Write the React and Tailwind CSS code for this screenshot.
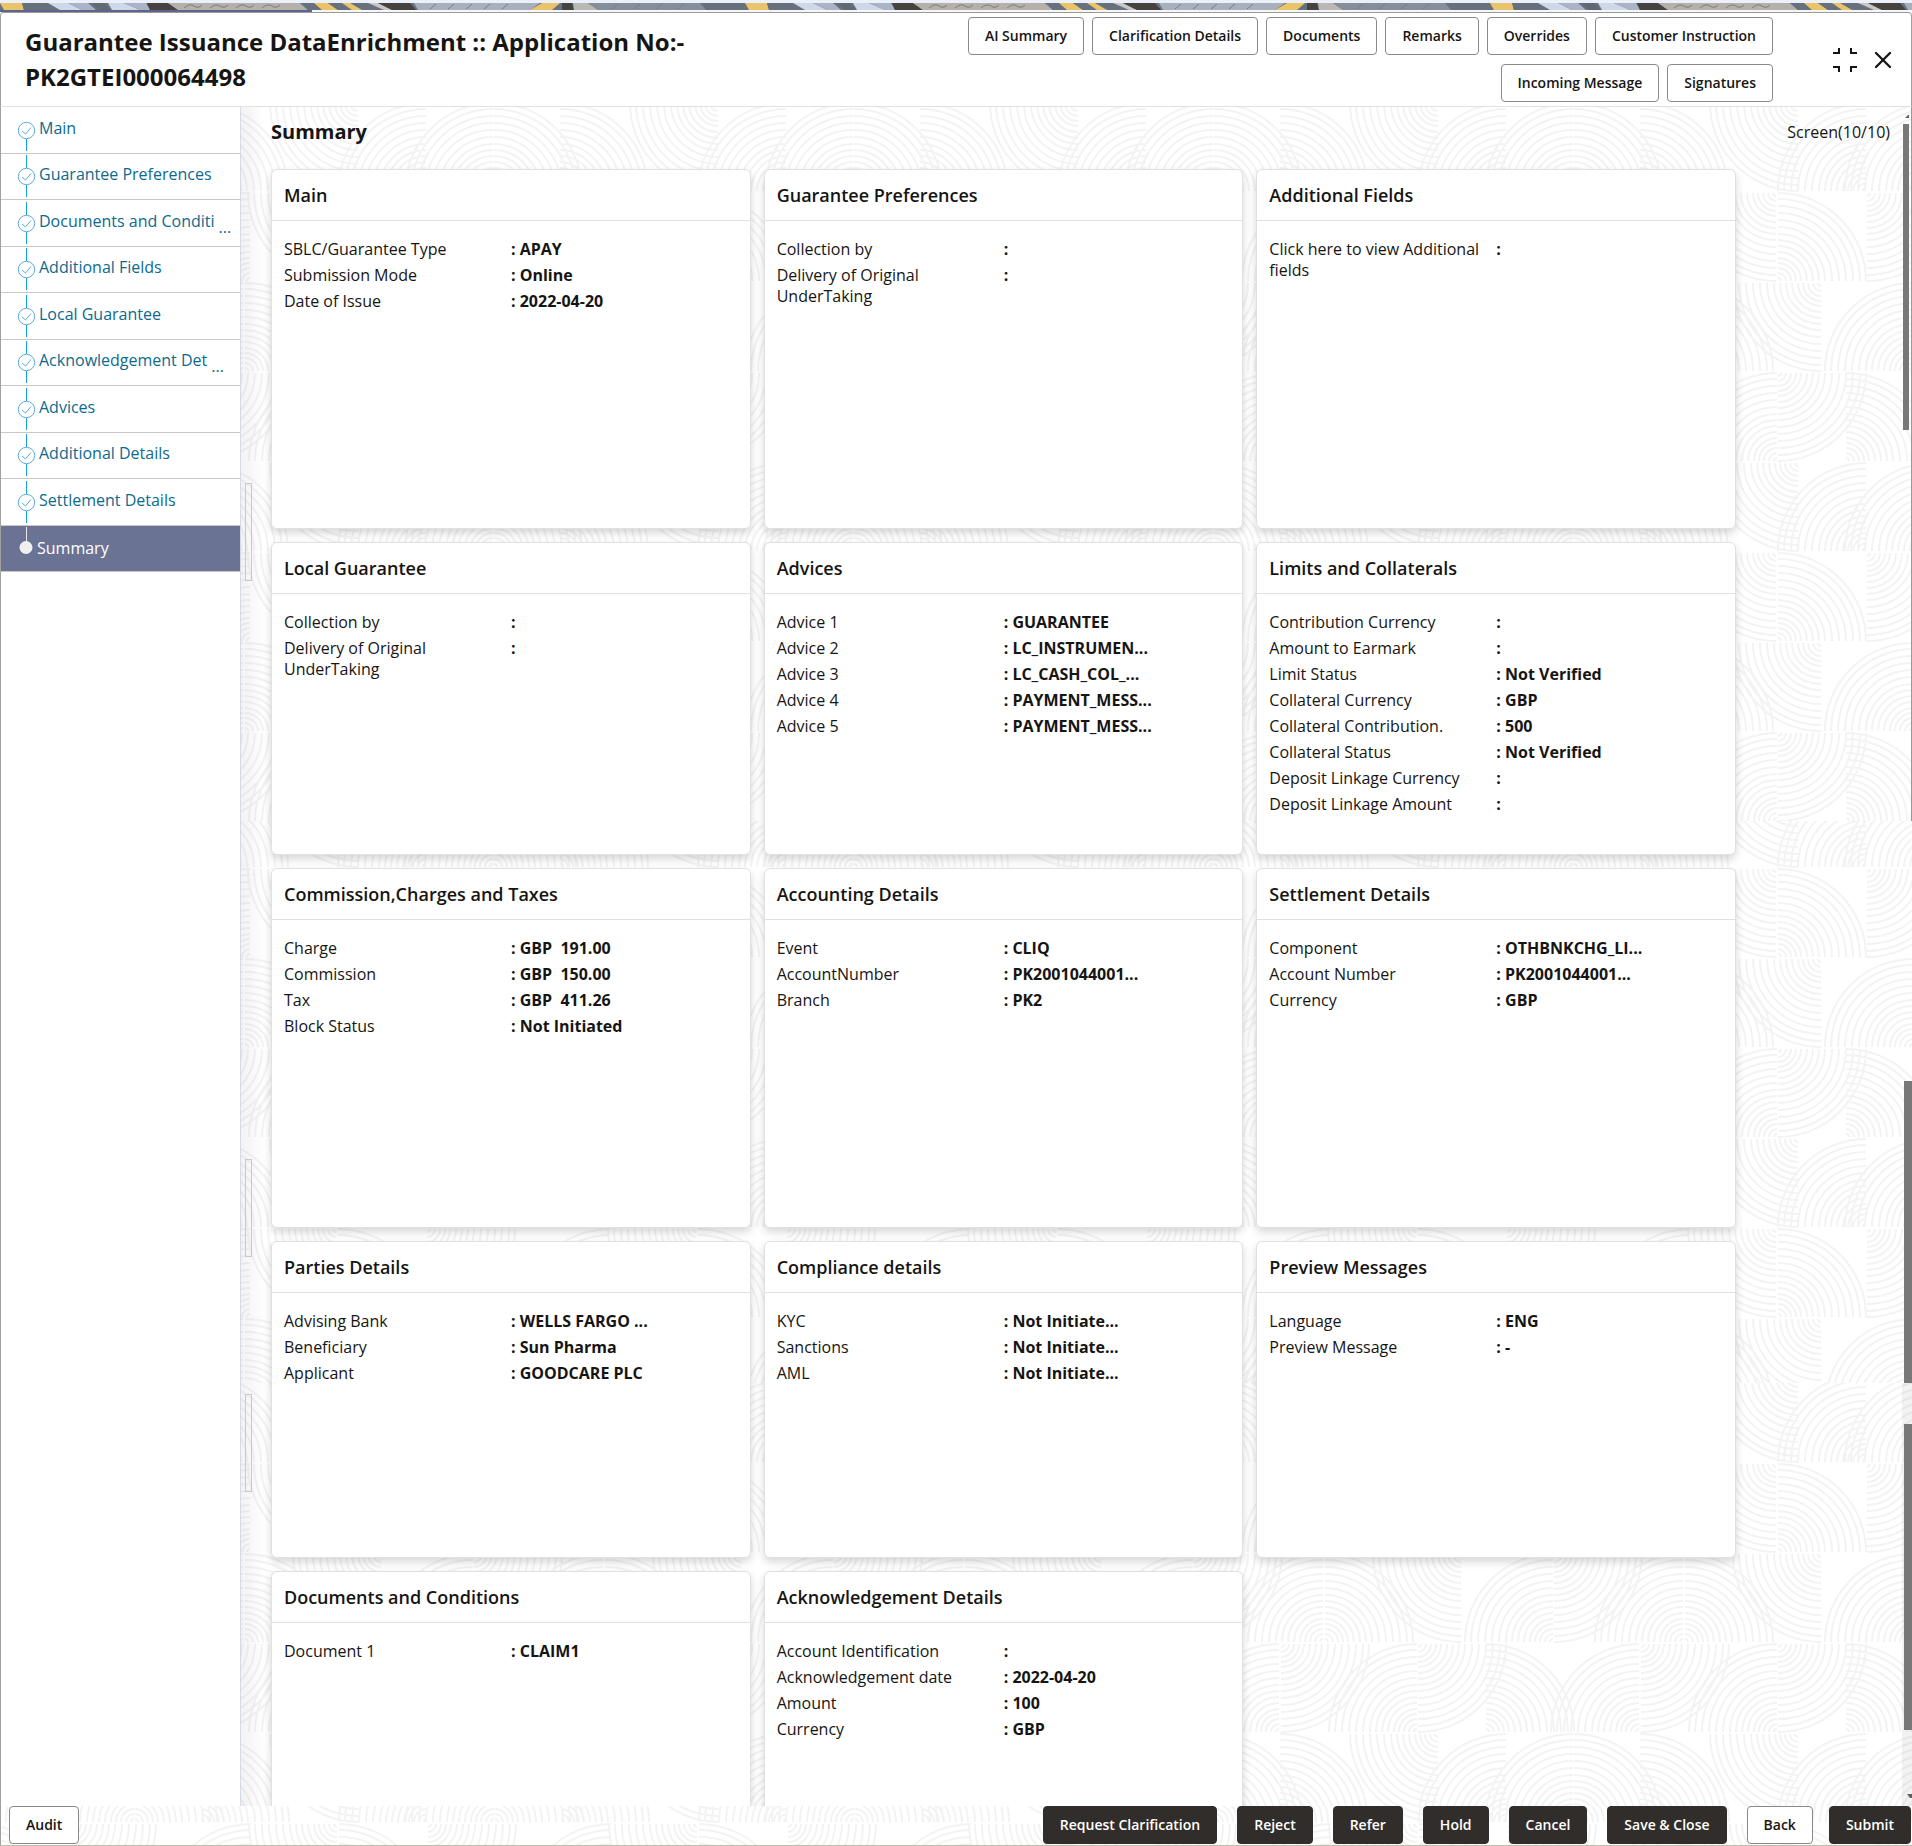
import { X } from "lucide-react";

const toolbar = [
  "AI Summary",
  "Clarification Details",
  "Documents",
  "Remarks",
  "Overrides",
  "Customer Instruction",
  "Incoming Message",
  "Signatures",
];

const steps = [
  { label: "Main" },
  { label: "Guarantee Preferences" },
  { label: "Documents and Conditi", cut: true },
  { label: "Additional Fields" },
  { label: "Local Guarantee" },
  { label: "Acknowledgement Det", cut: true },
  { label: "Advices" },
  { label: "Additional Details" },
  { label: "Settlement Details" },
  { label: "Summary", active: true },
];

const TALL = "min-h-[360px]";
const SHORT = "min-h-[313px]";
const MEDIUM = "min-h-[317px]";

const cards = [
  {
    title: "Main",
    size: TALL,
    rows: [
      ["SBLC/Guarantee Type", "APAY"],
      ["Submission Mode", "Online"],
      ["Date of Issue", "2022-04-20"],
    ],
  },
  {
    title: "Guarantee Preferences",
    size: TALL,
    rows: [
      ["Collection by", ""],
      ["Delivery of Original UnderTaking", ""],
    ],
  },
  {
    title: "Additional Fields",
    size: TALL,
    rows: [["Click here to view Additional fields", ""]],
  },
  {
    title: "Local Guarantee",
    size: SHORT,
    rows: [
      ["Collection by", ""],
      ["Delivery of Original UnderTaking", ""],
    ],
  },
  {
    title: "Advices",
    size: SHORT,
    rows: [
      ["Advice 1", "GUARANTEE"],
      ["Advice 2", "LC_INSTRUMEN..."],
      ["Advice 3", "LC_CASH_COL_..."],
      ["Advice 4", "PAYMENT_MESS..."],
      ["Advice 5", "PAYMENT_MESS..."],
    ],
  },
  {
    title: "Limits and Collaterals",
    size: SHORT,
    rows: [
      ["Contribution Currency", ""],
      ["Amount to Earmark", ""],
      ["Limit Status", "Not Verified"],
      ["Collateral Currency", "GBP"],
      ["Collateral Contribution.", "500"],
      ["Collateral Status", "Not Verified"],
      ["Deposit Linkage Currency", ""],
      ["Deposit Linkage Amount", ""],
    ],
  },
  {
    title: "Commission,Charges and Taxes",
    size: TALL,
    rows: [
      ["Charge", "GBP  191.00"],
      ["Commission", "GBP  150.00"],
      ["Tax", "GBP  411.26"],
      ["Block Status", "Not Initiated"],
    ],
  },
  {
    title: "Accounting Details",
    size: TALL,
    rows: [
      ["Event", "CLIQ"],
      ["AccountNumber", "PK2001044001..."],
      ["Branch", "PK2"],
    ],
  },
  {
    title: "Settlement Details",
    size: TALL,
    rows: [
      ["Component", "OTHBNKCHG_LI..."],
      ["Account Number", "PK2001044001..."],
      ["Currency", "GBP"],
    ],
  },
  {
    title: "Parties Details",
    size: MEDIUM,
    rows: [
      ["Advising Bank", "WELLS FARGO ..."],
      ["Beneficiary", "Sun Pharma"],
      ["Applicant", "GOODCARE PLC"],
    ],
  },
  {
    title: "Compliance details",
    size: MEDIUM,
    rows: [
      ["KYC", "Not Initiate..."],
      ["Sanctions", "Not Initiate..."],
      ["AML", "Not Initiate..."],
    ],
  },
  {
    title: "Preview Messages",
    size: MEDIUM,
    rows: [
      ["Language", "ENG"],
      ["Preview Message", "-"],
    ],
  },
  { title: "Documents and Conditions", size: TALL, rows: [["Document 1", "CLAIM1"]] },
  {
    title: "Acknowledgement Details",
    size: TALL,
    rows: [
      ["Account Identification", ""],
      ["Acknowledgement date", "2022-04-20"],
      ["Amount", "100"],
      ["Currency", "GBP"],
    ],
  },
];

// Quarter fans of the backdrop: [centre x, centre y, x direction, y direction]
const fans = [
  [185, 89, -1, -1], [252, 89, -1, -1], [253, 89, 1, -1], [117, 1, -1, 1], [319, 89, 1, -1],
  [95, 91, -1, 1], [97, 179, 1, -1], [186, 91, 1, 1], [9, 179, -1, -1],
  [2, 269, -1, -1], [4, 269, 1, -1], [140, 181, -1, 1], [232, 269, -1, -1], [233, 181, 1, 1],
  [318, 359, -1, -1], [320, 271, 1, 1], [96, 359, -1, -1], [97, 271, 1, 1], [165, 359, 1, -1],
];
const radii = [3, 8, 13, 18, 23, 29, 35, 41, 47, 54, 61, 68, 75, 82, 88];

const fanPath = fans
  .flatMap(([cx, cy, dx, dy]) =>
    [-360, 0, 360].flatMap((shift) =>
      radii.map((r) => {
        const x = cx + shift;
        return `M${x + dx * r} ${cy}A${r} ${r} 0 0 ${dx === dy ? 1 : 0} ${x} ${cy + dy * r}`;
      })
    )
  )
  .join("");

function Backdrop({ id, bands }) {
  return (
    <svg className="pointer-events-none absolute inset-0 h-full w-full" aria-hidden="true">
      <defs>
        {bands.map((b, i) => (
          <pattern key={i} id={id + i} x={b.dx} y={b.dy} width="360" height="360" patternUnits="userSpaceOnUse">
            <path d={fanPath} fill="none" stroke="#f3f3f3" strokeWidth="2" />
          </pattern>
        ))}
      </defs>
      {bands.map((b, i) => (
        <rect key={i} x="0" y={b.y} width="100%" height={b.h} fill={`url(#${id + i})`} />
      ))}
    </svg>
  );
}

const stripes = [
  ["#e9c46a", "0,0 22,0 24,7 4,7"],
  ["#66717d", "22,0 46,0 56,7 24,7"],
  ["#cdd8e8", "48,0 68,0 82,7 60,7"],
  ["#aab4c6", "68,0 88,0 96,7 82,7"],
  ["#5f6972", "92,0 104,0 110,7 100,7"],
  ["#cdd8e8", "108,0 124,0 140,7 112,7"],
  ["#aab4c6", "124,0 146,0 150,7 140,7"],
  ["#45423f", "147,0 168,0 178,7 150,7"],
  ["#b5b0a9", "168,0 300,0 308,7 178,7"],
  ["#66717d", "300,0 314,0 322,7 308,7"],
  ["#e9c46a", "314,0 328,0 338,7 322,7"],
  ["#66717d", "328,0 342,0 356,7 338,7"],
  ["#e9c46a", "342,0 350,0 362,7 352,7"],
  ["#c9c7c3", "368,0 378,0 392,7 384,7"],
  ["#45423f", "378,0 410,0 416,7 392,7"],
  ["#a7b0bd", "414,0 540,0 530,7 418,7"],
  ["#e9c46a", "542,0 560,0 552,7 530,7"],
  ["#45423f", "562,0 572,0 574,7 562,7"],
  ["#b9b8b5", "573,0 588,0 598,7 574,7"],
  ["#858f9b", "588,0 722,0 722,7 598,7"],
  ["#66717d", "700,0 745,0 745,7 706,7"],
];

function Banner() {
  return (
    <svg className="block h-[7px] w-full" aria-hidden="true">
      <defs>
        <pattern id="banner" width="745" height="7" patternUnits="userSpaceOnUse">
          <rect width="745" height="7" fill="#66717d" />
          {stripes.map(([fill, points]) => (
            <polygon key={points} fill={fill} points={points} />
          ))}
          <path
            d="M184 5q6-5 10-2t8-1M210 5q6-5 10-2t8-1M236 5q6-5 10-2t8-1M262 5q6-5 10-2t8-1M430 6l6-5M448 6l6-5M466 6l6-5M484 6l6-5M502 6l6-5M612 6l6-5M634 6l6-5M656 6l6-5M678 6l6-5"
            stroke="#7c7c7d"
            strokeWidth="1"
            fill="none"
          />
        </pattern>
      </defs>
      <rect width="100%" height="7" fill="url(#banner)" />
    </svg>
  );
}

function StepMarker({ first, active }) {
  if (active) {
    return (
      <svg className="h-[46px] w-5 shrink-0" viewBox="0 0 20 46" aria-hidden="true">
        <path d="M10.500 2v15" stroke="#e8e8e8" />
        <circle cx="10" cy="22.500" r="6.500" fill="#f1f0ee" />
      </svg>
    );
  }
  return (
    <svg className="h-[46px] w-5 shrink-0" viewBox="0 0 20 46" fill="none" aria-hidden="true">
      {!first && <path d="M10.500 2v13" stroke="#12a3dc" />}
      <path d="M10.500 32v12" stroke="#12a3dc" />
      <circle cx="10.500" cy="23.500" r="8.200" stroke="#5fa9e2" />
      <path d="M6 24l3.500 3 5.500-6.500" stroke="#5fa9e2" />
    </svg>
  );
}

function Step({ label, cut, active, first }) {
  return (
    <li className={"min-h-0 flex-1 border-b border-[#cbc8c4] " + (active ? "bg-[#6b7394]" : "bg-white")}>
      <a
        href="#step"
        className={"flex h-full items-center pl-[15px] " + (active ? "text-white" : "text-[#0c6a8e]")}
        aria-current={active ? "step" : undefined}
      >
        <StepMarker first={first} active={active} />
        <span className={active ? "pl-px whitespace-nowrap" : "pb-1 pl-[3px] whitespace-nowrap"}>{label}</span>
        {cut && <span className="pt-2 pl-1">...</span>}
      </a>
    </li>
  );
}

function Card({ title, size, rows }) {
  return (
    <section className={"rounded-md border border-[#e1e1e1] bg-white shadow-[0_4px_8px_rgba(0,0,0,0.16)] " + size}>
      <h2 className="border-b border-[#e1e1e1] px-3 py-3 text-lg leading-[26px] font-semibold">{title}</h2>
      <dl className="px-3 pt-[18px]">
        {rows.map(([name, value]) => (
          <div key={name} className="mb-[5px] flex">
            <dt className="w-[227px] shrink-0 pr-2 leading-[21px]">{name}</dt>
            <dd className="leading-[21px] font-bold whitespace-pre">{": " + value}</dd>
          </div>
        ))}
      </dl>
    </section>
  );
}

function Button({ children, dark }) {
  return (
    <button
      type="button"
      className={
        "h-[38px] rounded border px-4 text-sm font-semibold whitespace-nowrap " +
        (dark ? "border-[#312d2a] bg-[#312d2a] text-white" : "border-[#8b8986] bg-white text-[#161513]")
      }
    >
      {children}
    </button>
  );
}

export default function App() {
  return (
    <div className="flex h-screen flex-col overflow-hidden bg-white font-['Open_Sans','Noto_Sans',sans-serif] text-base text-[#161513]">
      <div className="h-[3px] shrink-0 bg-[#ebf0fb]" />
      <div className="shrink-0">
        <Banner />
      </div>
      <div className="h-[2px] shrink-0 bg-[#f6f6f6]">
        <div className="h-full w-[312px] bg-[#5d658f]" />
      </div>

      <div className="relative flex min-h-0 flex-1 flex-col border-b border-[#c2bca6]">
        <header className="flex h-[95px] shrink-0 items-start justify-between rounded-t border-x border-t border-b border-x-[#a0a0a0] border-t-[#999999] border-b-[#e1e1e1] pr-[14px]">
          <h1 className="w-2/5 pt-[11px] pl-6 text-2xl leading-[35px] font-bold">
            Guarantee Issuance DataEnrichment :: Application No:- PK2GTEI000064498
          </h1>
          <div className="flex items-start">
            <div className="flex max-w-[808px] flex-wrap justify-end gap-x-2 gap-y-[9px] pt-1">
              {toolbar.map((label) => (
                <Button key={label}>{label}</Button>
              ))}
            </div>
            <div className="flex items-center gap-3 pt-[33px] pl-[60px]">
              <button type="button" aria-label="Collapse">
                <svg className="h-6 w-6" viewBox="0 0 24 24" fill="none" stroke="#161513" strokeWidth="2" aria-hidden="true">
                  <path d="M6 0v5H0M18 0v5h6M0 19h6v5M24 19h-6v5" />
                </svg>
              </button>
              <button type="button" aria-label="Close">
                <X className="h-7 w-7" strokeWidth={2} color="#161513" />
              </button>
            </div>
          </div>
        </header>

        <div className="flex min-h-0 flex-1">
          <nav className="w-[241px] shrink-0 border-r border-l border-r-[#d5dbe5] border-l-[#a0a0a0]">
            <ol className="flex h-[465px] flex-col">
              {steps.map((step, i) => (
                <Step key={step.label} {...step} first={i === 0} />
              ))}
            </ol>
          </nav>

          <main className="relative min-w-0 flex-1 overflow-hidden">
            <Backdrop
              id="fans"
              bands={[
                { y: 0, h: 714, dx: 0, dy: -5 },
                { y: 714, h: 562, dx: 0, dy: 671 },
                { y: 1276, h: 1000, dx: 0, dy: 1266 },
              ]}
            />
            <div className="absolute inset-y-0 left-0 w-6 bg-linear-to-r from-black/5 to-transparent" />
            <div className="absolute top-[376px] left-1 h-[98px] w-[7px] border border-[#c9c9c9]" />
            <div className="absolute top-[1052px] left-1 h-[98px] w-[7px] border border-[#c9c9c9]" />
            <div className="absolute top-[1287px] left-1 h-[98px] w-[7px] border border-[#c9c9c9]" />

            <div className="relative">
              <div className="flex items-center justify-between pt-[10px] pr-[22px] pb-[22px] pl-[30px]">
                <h2 className="text-xl leading-[30px] font-bold">Summary</h2>
                <span>Screen(10/10)</span>
              </div>
              <div className="grid grid-cols-3 gap-[13px] pr-[176px] pl-[30px]">
                {cards.map((card) => (
                  <Card key={card.title} {...card} />
                ))}
              </div>
            </div>

            {/* Scroll bars */}
            <div className="absolute top-0 right-0 h-[714px] w-px bg-[#999999]" />
            <div className="absolute top-[17px] right-[3px] h-[306px] w-[6px] bg-[#787878]" />
            <div className="absolute top-[974px] right-0 h-[302px] w-2 bg-[#787878]" />
            <div className="absolute top-[1276px] right-0 bottom-0 w-[10px] bg-black/5" />
            <div className="absolute top-[1317px] right-0 h-[306px] w-2 bg-[#787878]" />
            <svg className="absolute top-[8px] right-[3px] h-[3px] w-[4px]" viewBox="0 0 4 3" aria-hidden="true">
              <path d="M0 3L3 0h1v3z" fill="#606060" />
            </svg>
            <svg className="absolute right-0 bottom-[8px] h-[4px] w-[5px]" viewBox="0 0 5 4" aria-hidden="true">
              <path d="M0 0h5v4H3z" fill="#606060" />
            </svg>
          </main>
        </div>

        <footer className="relative flex h-[39px] shrink-0 items-start justify-between border-l border-[#a0a0a0]">
          <Backdrop id="foot" bands={[{ y: 0, h: 39, dx: -119, dy: -73 }]} />
          <div className="relative flex pl-2">
            <Button>Audit</Button>
          </div>
          <div className="relative flex gap-5 pr-px">
            <Button dark>Request Clarification</Button>
            <Button dark>Reject</Button>
            <Button dark>Refer</Button>
            <Button dark>Hold</Button>
            <Button dark>Cancel</Button>
            <Button dark>Save &amp; Close</Button>
            <div className="flex gap-4">
              <Button>Back</Button>
              <Button dark>Submit</Button>
            </div>
          </div>
        </footer>
      </div>
    </div>
  );
}
